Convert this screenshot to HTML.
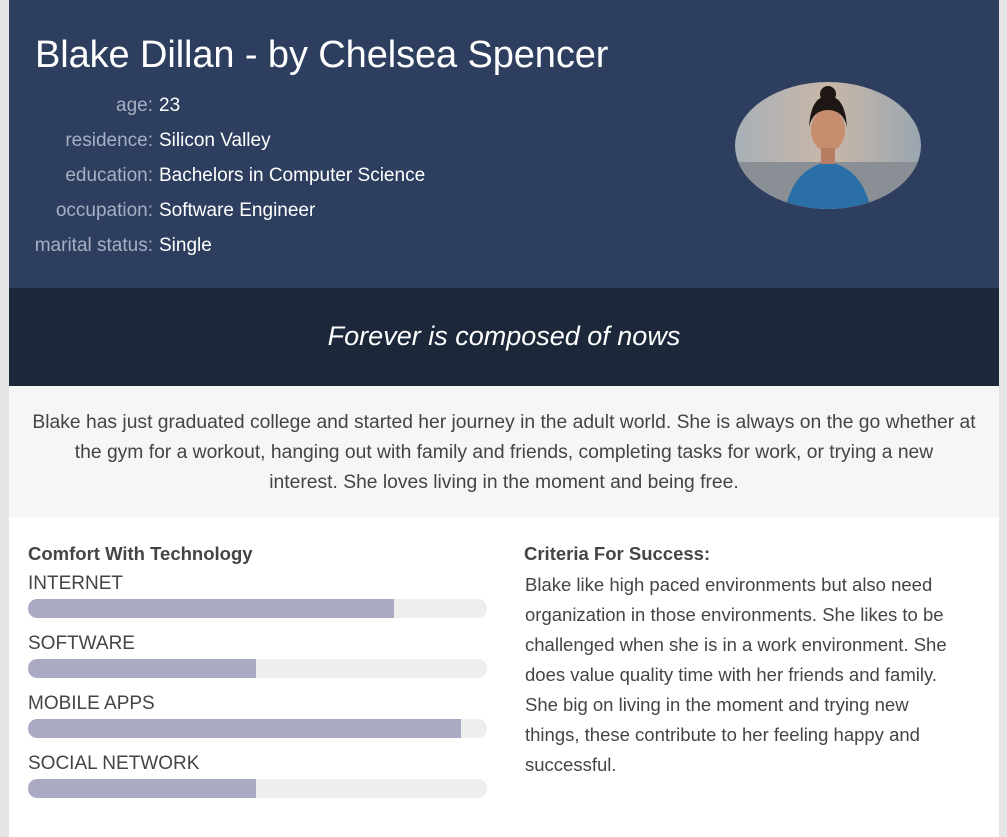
<!DOCTYPE html>
<html><head><meta charset="utf-8"><style>
*{margin:0;padding:0;box-sizing:border-box}
body{width:1007px;height:837px;background:#e6e6e6;font-family:"Liberation Sans",sans-serif;overflow:hidden;position:relative}
.main{position:absolute;left:9px;top:0;width:990px;height:837px;background:#fff}
.hdr{position:absolute;left:0;top:0;width:990px;height:288px;background:#2d3e5e}
h1{position:absolute;left:26px;top:34px;font-size:38px;font-weight:normal;color:#fff;letter-spacing:-0.1px}
.row{position:absolute;left:0;font-size:19px;color:#fff;white-space:nowrap}
.row .k{display:inline-block;width:144px;text-align:right;color:#a7afc4;margin-right:6px}
.quote{position:absolute;left:0;top:288px;width:990px;height:98px;background:#1c273a;color:#fff;font-style:italic;font-size:27px;text-align:center;line-height:96px}
.bio{position:absolute;left:0;top:386px;width:990px;height:131px;background:#f6f6f6;color:#444;font-size:19.3px;line-height:30px;text-align:center;padding:22px 0 0;white-space:nowrap}
.h{position:absolute;font-weight:bold;font-size:18.5px;color:#444}
.lab{position:absolute;left:19px;font-size:19px;color:#444}
.bar{position:absolute;left:19px;width:459px;height:19px;background:#eee;border-radius:9px;overflow:hidden}
.bar div{height:100%;background:#abaac3;border-radius:9px 0 0 9px}
.txt{position:absolute;left:516px;top:570px;width:480px;font-size:18.5px;line-height:30px;color:#444;white-space:nowrap}
</style></head><body>
<div class="main">
<div class="hdr">
<h1>Blake Dillan - by Chelsea Spencer</h1>
<div class="row" style="top:95px"><span class="k">age:</span>23</div>
<div class="row" style="top:130px"><span class="k">residence:</span>Silicon Valley</div>
<div class="row" style="top:165px"><span class="k">education:</span>Bachelors in Computer Science</div>
<div class="row" style="top:200px"><span class="k">occupation:</span>Software Engineer</div>
<div class="row" style="top:235px"><span class="k">marital status:</span>Single</div>
<svg style="position:absolute;left:726px;top:82px" width="186" height="127" viewBox="0 0 186 127">
<defs><clipPath id="c"><ellipse cx="93" cy="63.5" rx="93" ry="63.5"/></clipPath>
<linearGradient id="g" x1="0" x2="1"><stop offset="0" stop-color="#a8b0b8"/><stop offset=".5" stop-color="#c9b7a8"/><stop offset="1" stop-color="#9aa6b0"/></linearGradient></defs>
<g clip-path="url(#c)">
<rect width="186" height="127" fill="url(#g)"/>
<rect y="80" width="186" height="47" fill="#8a8f96"/>
<path d="M50 127 Q60 85 93 80 Q126 85 136 127Z" fill="#2a6fa8"/>
<ellipse cx="93" cy="48" rx="17" ry="22" fill="#c68d6e"/>
<path d="M74 45 Q76 14 93 14 Q110 14 112 45 Q108 28 93 28 Q78 28 74 45Z" fill="#1e1612"/>
<circle cx="93" cy="12" r="8" fill="#1e1612"/>
<rect x="86" y="66" width="14" height="16" fill="#b57e62"/>
</g></svg>
</div>
<div class="quote">Forever is composed of nows</div>
<div class="bio">Blake has just graduated college and started her journey in the adult world. She is always on the go whether at<br>the gym for a workout, hanging out with family and friends, completing tasks for work, or trying a new<br>interest. She loves living in the moment and being free.</div>
<div class="h" style="left:19px;top:543px">Comfort With Technology</div>
<div class="lab" style="top:573px">INTERNET</div>
<div class="bar" style="top:599px"><div style="width:366px"></div></div>
<div class="lab" style="top:633px">SOFTWARE</div>
<div class="bar" style="top:659px"><div style="width:228px"></div></div>
<div class="lab" style="top:693px">MOBILE APPS</div>
<div class="bar" style="top:719px"><div style="width:433px"></div></div>
<div class="lab" style="top:753px">SOCIAL NETWORK</div>
<div class="bar" style="top:779px"><div style="width:228px"></div></div>
<div class="h" style="left:515px;top:543px">Criteria For Success:</div>
<div class="txt">Blake like high paced environments but also need<br>organization in those environments. She likes to be<br>challenged when she is in a work environment. She<br>does value quality time with her friends and family.<br>She big on living in the moment and trying new<br>things, these contribute to her feeling happy and<br>successful.</div>
</div>
</body></html>
